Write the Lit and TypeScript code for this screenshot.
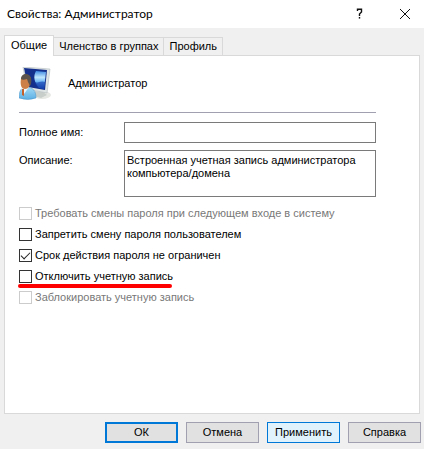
import { LitElement, html, css, svg } from "lit";
import { customElement, state } from "lit/decorators.js";
import { classMap } from "lit/directives/class-map.js";

interface Option {
  id: string;
  label: string;
  checked?: boolean;
  disabled?: boolean;
  marked?: boolean;
}

const OPTIONS: Option[] = [
  { id: "must-change", label: "Требовать смены пароля при следующем входе в систему", disabled: true },
  { id: "cannot-change", label: "Запретить смену пароля пользователем" },
  { id: "never-expires", label: "Срок действия пароля не ограничен", checked: true },
  { id: "account-off", label: "Отключить учетную запись", marked: true },
  { id: "locked", label: "Заблокировать учетную запись", disabled: true },
];

const TABS = ["Общие", "Членство в группах", "Профиль"];

const userIcon = svg`
  <defs>
    <linearGradient id="screen" x1="0" y1="0" x2="0" y2="1">
      <stop offset="0" stop-color="#3f8ae4"/>
      <stop offset="0.35" stop-color="#c0e6fd"/>
      <stop offset="0.6" stop-color="#6ab4f4"/>
      <stop offset="1" stop-color="#1546b4"/>
    </linearGradient>
    <linearGradient id="shirt" x1="0" y1="0" x2="0" y2="1">
      <stop offset="0" stop-color="#a4daf6"/>
      <stop offset="1" stop-color="#5cb0e6"/>
    </linearGradient>
  </defs>
  <ellipse cx="23" cy="28" rx="9" ry="4" fill="#e6e8e4"/>
  <path d="M16 24 L24 25 L28 28 L22 31 L15 29 Z" fill="#c8ceca"/>
  <path d="M4 0 L31 2 L28 26 L8 22 Z" fill="#dfe4e4" stroke="#b4bcbe" stroke-width="0.6"/>
  <path d="M5 1 L28 3 L26 23 L9 20 Z" fill="#15308c"/>
  <path d="M17 4 L27 5 L25 22 L20 21 C15 15 14 9 17 4 Z" fill="url(#screen)"/>
  <path d="M15 15 C18 17 22 13 26 15 L25 22 L18 20 Z" fill="#1038a8" opacity="0.6"/>
  <path d="M0 31 C0 23 3 20 7 20 C14 20 17 24 17 31 Q9 34 0 31 Z" fill="url(#shirt)" stroke="#4a92c6" stroke-width="0.5"/>
  <path d="M2 21 L10 20 L5 27 Z" fill="#eef6fa"/>
  <path d="M3 22 L5 22 L5 29 L3 28 Z" fill="#c4602c"/>
  <path d="M2 12 C3 7 11 7 12 12 C12 17 10 22 6 22 C2 22 1 17 2 12 Z" fill="#cc8048"/>
  <path d="M2 12 C2 7 7 6 10 8 C13 10 13 16 11 19 L9 15 L8 12 C5 13 3 13 2 12 Z" fill="#5c544c"/>
`;

@customElement("app-root")
export class AppRoot extends LitElement {
  @state() private activeTab = 0;

  static styles = css`
    :host {
      display: block;
      font: 11px/13px "Liberation Sans", Arial, sans-serif;
      color: #000;
    }
    .dialog {
      display: flex;
      flex-direction: column;
      min-height: 100vh;
      background: #f0f0f0;
    }
    button, input, textarea {
      font: inherit;
      color: inherit;
      margin: 0;
      border-radius: 0;
      box-sizing: border-box;
    }
    .titlebar {
      display: flex;
      align-items: center;
      gap: 7px;
      height: 28px;
      padding-left: 7px;
      background: #fff;
    }
    h1 {
      flex: 1;
      margin: 0;
      font: 12px/16px Lato, "Liberation Sans", sans-serif;
    }
    .caption {
      display: grid;
      place-items: center;
      width: 38px;
      height: 24px;
      padding: 0;
      border: 0;
      background: none;
    }
    .caption svg, .logo { display: block; }
    .tabs {
      display: flex;
      align-items: flex-end;
      padding: 7px 4px 0;
    }
    .tab {
      height: 18px;
      padding: 0 5px;
      border: 1px solid #d9d9d9;
      border-width: 1px 1px 0 0;
      background: #f0f0f0;
      white-space: nowrap;
    }
    .tab.active {
      height: 21px;
      margin-bottom: -1px;
      padding: 0 6px 2px;
      border-left-width: 1px;
      background: #fff;
      position: relative;
    }
    .panel {
      flex: 1;
      margin: 0 4px;
      padding: 11px 43px 16px 14px;
      border: 1px solid #d9d9d9;
      background: #fff;
    }
    .identity {
      display: flex;
      align-items: center;
      gap: 17px;
      padding-bottom: 12px;
      border-bottom: 1px solid #a0a0b0;
    }
    .fields {
      display: grid;
      grid-template-columns: 105px 1fr;
      row-gap: 7px;
      margin: 9px 0 6px;
    }
    .fields label { padding-top: 4px; }
    .field {
      width: 100%;
      height: 21px;
      padding: 2px;
      border: 1px solid #7a7a7a;
      background: #fff;
      outline: 0;
    }
    textarea.field {
      display: block;
      height: 47px;
      padding: 3px 2px;
      resize: none;
      overflow: hidden;
    }
    .options {
      display: flex;
      flex-direction: column;
      align-items: flex-start;
    }
    .option {
      display: flex;
      align-items: center;
      gap: 3px;
      height: 21px;
      white-space: nowrap;
    }
    .option.disabled { color: #787878; }
    .box {
      appearance: none;
      width: 13px;
      height: 13px;
      border: 1px solid #333;
      background: #fff;
      display: grid;
      place-items: center;
    }
    .box:disabled { border-color: #ccc; }
    .box:checked::before {
      content: "";
      width: 9px;
      height: 5px;
      margin-top: -3px;
      border: solid #222;
      border-width: 0 0 1px 1px;
      box-sizing: border-box;
      transform: rotate(-45deg);
    }
    .option.marked { position: relative; }
    .option.marked::after {
      content: "";
      position: absolute;
      left: -1px;
      right: 1px;
      bottom: -1px;
      height: 4px;
      border-radius: 2px;
      background: #f00;
    }
    .actions {
      display: flex;
      justify-content: flex-end;
      gap: 8px;
      padding: 8px 3px 6px;
    }
    .action {
      width: 73px;
      height: 21px;
      padding: 0;
      border: 1px solid #a0a0b0;
      background: #e1e1e1;
    }
    .action.default { border: 2px solid #0078d7; }
    .action.hot { border-color: #0078d7; background: #e0f3fc; }
  `;

  render() {
    return html`
      <main class="dialog">
        <header class="titlebar">
          <h1>Свойства: Администратор</h1>
          <button class="caption" aria-label="Справка">
            <svg width="8" height="12" viewBox="0 0 8 12" fill="none" stroke="#111" stroke-width="1.4">
              <path d="M1.5 3 V1.2 H5.5 V4 L3.5 6 V8"/><path d="M3.5 9 V10.6"/>
            </svg>
          </button>
          <button class="caption" aria-label="Закрыть">
            <svg width="10" height="10" viewBox="0 0 10 10" stroke="#111"><path d="M0 0 L10 10 M10 0 L0 10"/></svg>
          </button>
        </header>
        <div class="tabs" role="tablist">
          ${TABS.map((name, i) => html`
            <button role="tab" aria-selected=${i === this.activeTab}
              class=${classMap({ tab: true, active: i === this.activeTab })}
              @click=${() => (this.activeTab = i)}>${name}</button>`)}
        </div>
        <section class="panel">
          <div class="identity">
            <svg class="logo" width="32" height="33" viewBox="0 0 32 33">${userIcon}</svg>
            <span>Администратор</span>
          </div>
          <div class="fields">
            <label for="full-name">Полное имя:</label>
            <input id="full-name" class="field" type="text">
            <label for="about">Описание:</label>
            <textarea id="about" class="field" .value=${"Встроенная учетная запись администратора компьютера/домена"}></textarea>
          </div>
          <div class="options">
            ${OPTIONS.map((o) => html`
              <label for=${o.id} class=${classMap({ option: true, disabled: !!o.disabled, marked: !!o.marked })}>
                <input id=${o.id} class="box" type="checkbox" ?checked=${o.checked} ?disabled=${o.disabled}>
                ${o.label}
              </label>`)}
          </div>
        </section>
        <footer class="actions">
          <button class="action default">ОК</button>
          <button class="action">Отмена</button>
          <button class="action hot">Применить</button>
          <button class="action">Справка</button>
        </footer>
      </main>
    `;
  }
}
